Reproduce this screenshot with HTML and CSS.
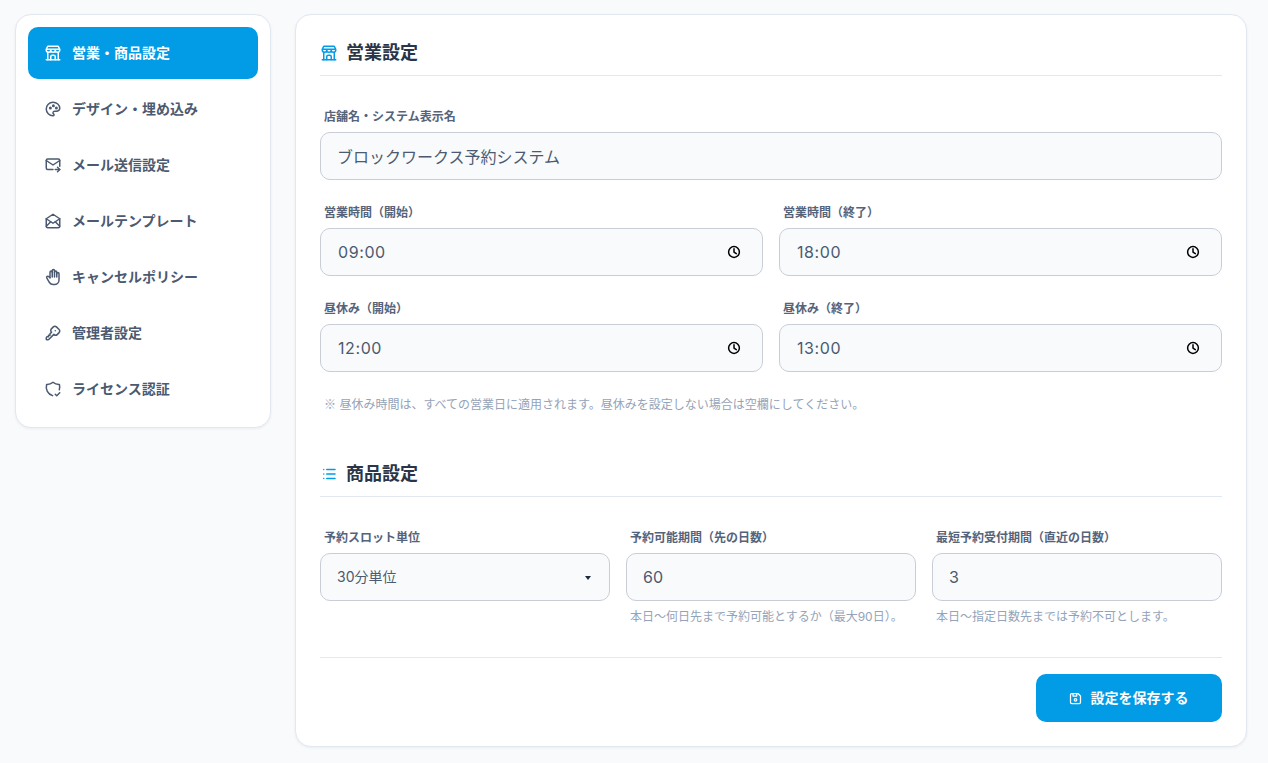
FILE: index.html
```html
<!DOCTYPE html>
<html lang="ja">
<head>
    <meta charset="UTF-8" />
    <meta name="viewport" content="width=device-width, initial-scale=1.0"/>
    <title>設定</title>
    <link rel="stylesheet" href="styles.css">
</head>
<body>
    <svg class="icon-defs" width="0" height="0" aria-hidden="true">
        <symbol id="i-store" viewBox="0 0 24 24"><path d="M3 21l18 0"/><path d="M3 7v1a3 3 0 0 0 6 0v-1m0 1a3 3 0 0 0 6 0v-1m0 1a3 3 0 0 0 6 0v-1h-18l2 -4h14l2 4"/><path d="M5 21l0 -10.15"/><path d="M19 21l0 -10.15"/><path d="M9 21v-4a2 2 0 0 1 2 -2h2a2 2 0 0 1 2 2v4"/></symbol>
        <symbol id="i-palette" viewBox="0 0 24 24"><path d="M12 21a9 9 0 0 1 0 -18c4.97 0 9 3.582 9 8c0 1.06 -.474 2.078 -1.318 2.828c-.844 .75 -1.989 1.172 -3.182 1.172h-2.5a2 2 0 0 0 -1 3.75a1.3 1.3 0 0 1 -1 2.25"/><path d="M8.5 10.5m-1 0a1 1 0 1 0 2 0a1 1 0 1 0 -2 0"/><path d="M12.5 7.5m-1 0a1 1 0 1 0 2 0a1 1 0 1 0 -2 0"/><path d="M16.5 10.5m-1 0a1 1 0 1 0 2 0a1 1 0 1 0 -2 0"/></symbol>
        <symbol id="i-mail-forward" viewBox="0 0 24 24"><path d="M12 18h-7a2 2 0 0 1 -2 -2v-10a2 2 0 0 1 2 -2h14a2 2 0 0 1 2 2v7.5"/><path d="M3 6l9 6l9 -6"/><path d="M15 18h6"/><path d="M18 15l3 3l-3 3"/></symbol>
        <symbol id="i-mail-opened" viewBox="0 0 24 24"><path d="M3 9l9 6l9 -6l-9 -6l-9 6"/><path d="M21 9v10a2 2 0 0 1 -2 2h-14a2 2 0 0 1 -2 -2v-10"/><path d="M3 19l6 -6"/><path d="M15 13l6 6"/></symbol>
        <symbol id="i-hand" viewBox="0 0 24 24"><path d="M8 13v-7.5a1.5 1.5 0 0 1 3 0v6.5"/><path d="M11 5.5v-2a1.5 1.5 0 1 1 3 0v8.5"/><path d="M14 5.5a1.5 1.5 0 0 1 3 0v6.5"/><path d="M17 7.5a1.5 1.5 0 0 1 3 0v8.5a6 6 0 0 1 -6 6h-2h.208a6 6 0 0 1 -5.012 -2.7a69.74 69.74 0 0 1 -.196 -.3c-.312 -.479 -1.407 -2.388 -3.286 -5.728a1.5 1.5 0 0 1 .536 -2.022a1.867 1.867 0 0 1 2.28 .28l1.47 1.47"/></symbol>
        <symbol id="i-key" viewBox="0 0 24 24"><path d="M16.555 3.843l3.602 3.602a2.877 2.877 0 0 1 0 4.069l-2.643 2.643a2.877 2.877 0 0 1 -4.069 0l-.301 -.301l-6.558 6.558a2 2 0 0 1 -1.239 .578l-.175 .008h-1.172a1 1 0 0 1 -.993 -.883l-.007 -.117v-1.172a2 2 0 0 1 .467 -1.284l.119 -.13l.414 -.414h2v-2h2v-2l2.144 -2.144l-.301 -.301a2.877 2.877 0 0 1 0 -4.069l2.643 -2.643a2.877 2.877 0 0 1 4.069 0z"/><path d="M15 9h.01"/></symbol>
        <symbol id="i-shield" viewBox="0 0 24 24"><path d="M11.46 20.846a12 12 0 0 1 -7.96 -14.846a12 12 0 0 0 8.5 -3a12 12 0 0 0 8.5 3a12 12 0 0 1 -.09 7.06"/><path d="M15 19l2 2l4 -4"/></symbol>
        <symbol id="i-list" viewBox="0 0 24 24"><path d="M9 6l11 0"/><path d="M9 12l11 0"/><path d="M9 18l11 0"/><path d="M5 6l0 .01"/><path d="M5 12l0 .01"/><path d="M5 18l0 .01"/></symbol>
        <symbol id="i-save" viewBox="0 0 24 24"><path d="M6 4h10l4 4v10a2 2 0 0 1 -2 2h-12a2 2 0 0 1 -2 -2v-12a2 2 0 0 1 2 -2"/><path d="M12 14m-2 0a2 2 0 1 0 4 0a2 2 0 1 0 -4 0"/><path d="M14 4l0 4l-6 0l0 -4"/></symbol>
        <symbol id="i-clock" viewBox="0 0 14 14"><circle cx="7" cy="7" r="5.4"/><path d="M7 3.8v3.4l2.3 1.5"/></symbol>
    </svg>

    <div class="layout">
        <nav class="sidebar">
            <a class="nav-item active"><svg class="nav-icon"><use href="#i-store"/></svg><span class="nav-label">営業・商品設定</span></a>
            <a class="nav-item"><svg class="nav-icon"><use href="#i-palette"/></svg><span class="nav-label">デザイン・埋め込み</span></a>
            <a class="nav-item"><svg class="nav-icon"><use href="#i-mail-forward"/></svg><span class="nav-label">メール送信設定</span></a>
            <a class="nav-item"><svg class="nav-icon"><use href="#i-mail-opened"/></svg><span class="nav-label">メールテンプレート</span></a>
            <a class="nav-item"><svg class="nav-icon"><use href="#i-hand"/></svg><span class="nav-label">キャンセルポリシー</span></a>
            <a class="nav-item"><svg class="nav-icon"><use href="#i-key"/></svg><span class="nav-label">管理者設定</span></a>
            <a class="nav-item"><svg class="nav-icon"><use href="#i-shield"/></svg><span class="nav-label">ライセンス認証</span></a>
        </nav>

        <main class="panel">
            <h2 class="section-title"><svg class="title-icon"><use href="#i-store"/></svg>営業設定</h2>

            <div class="fields">
                <div class="field">
                    <label class="field-label">店舗名・システム表示名</label>
                    <input class="input" type="text" value="ブロックワークス予約システム">
                </div>
                <div class="row row-2">
                    <div class="field">
                        <label class="field-label">営業時間（開始）</label>
                        <div class="input time-input"><input type="text" value="09:00"><svg class="clock"><use href="#i-clock"/></svg></div>
                    </div>
                    <div class="field">
                        <label class="field-label">営業時間（終了）</label>
                        <div class="input time-input"><input type="text" value="18:00"><svg class="clock"><use href="#i-clock"/></svg></div>
                    </div>
                </div>
                <div class="row row-2">
                    <div class="field">
                        <label class="field-label">昼休み（開始）</label>
                        <div class="input time-input"><input type="text" value="12:00"><svg class="clock"><use href="#i-clock"/></svg></div>
                    </div>
                    <div class="field">
                        <label class="field-label">昼休み（終了）</label>
                        <div class="input time-input"><input type="text" value="13:00"><svg class="clock"><use href="#i-clock"/></svg></div>
                    </div>
                </div>
                <p class="note"><span class="cjk">※</span> 昼休み時間は、すべての営業日に適用されます。昼休みを設定しない場合は空欄にしてください。</p>
            </div>

            <h2 class="section-title second"><svg class="title-icon"><use href="#i-list"/></svg>商品設定</h2>

            <div class="row row-3">
                <div class="field">
                    <label class="field-label">予約スロット単位</label>
                    <div class="select-box">
                        <select class="input select">
                            <option>30分単位</option>
                        </select>
                    </div>
                </div>
                <div class="field">
                    <label class="field-label">予約可能期間（先の日数）</label>
                    <input class="input" type="text" value="60">
                    <p class="help">本日〜何日先まで予約可能とするか（最大90日）。</p>
                </div>
                <div class="field">
                    <label class="field-label">最短予約受付期間（直近の日数）</label>
                    <input class="input" type="text" value="3">
                    <p class="help">本日〜指定日数先までは予約不可とします。</p>
                </div>
            </div>

            <div class="panel-footer">
                <button class="save-button"><svg class="save-icon"><use href="#i-save"/></svg><span class="nav-label">設定を保存する</span></button>
            </div>
        </main>
    </div>
</body>
</html>
```

FILE: styles.css
```css
* {
    margin: 0;
    padding: 0;
    box-sizing: border-box;
    font-family: Inter, 'Noto Sans CJK JP', sans-serif;
}

:root {
    --primary-color: #019ce5;
    --text-color: #4b5a70;
    --label-color: #55637a;
    --title-color: #2a3547;
    --muted-color: #94a3b8;
    --line-color: #e2e8f0;
    --field-border: #c9ced6;
    --page-bg: #f8fafc;
}

body {
    background: var(--page-bg);
    min-height: 100vh;
    overflow: hidden;
}

.icon-defs {
    display: block;
}

.cjk {
    font-family: 'Noto Sans CJK JP', sans-serif;
}

svg {
    fill: none;
    stroke: currentColor;
    stroke-width: 2;
    stroke-linecap: round;
    stroke-linejoin: round;
    flex-shrink: 0;
}

.layout {
    display: flex;
    align-items: flex-start;
    gap: 24px;
    padding: 14px 21px 16px 15px;
}

.sidebar,
.panel {
    background: #fff;
    border: 1px solid var(--line-color);
    border-radius: 16px;
    box-shadow: 0 1px 3px rgba(15, 23, 42, 0.06);
}

.sidebar {
    width: 256px;
    padding: 12px;
    display: flex;
    flex-direction: column;
    gap: 4px;
}

.nav-item {
    height: 52px;
    padding: 0 16px;
    display: flex;
    align-items: center;
    gap: 10px;
    border-radius: 10px;
    font-size: 14px;
    font-weight: 700;
    color: var(--text-color);
}

.nav-item.active {
    background: var(--primary-color);
    color: #fff;
}

.nav-label {
    padding-bottom: 2px;
}

.nav-icon {
    width: 18px;
    height: 18px;
}

.panel {
    flex: 1;
    padding: 24px;
}

.section-title {
    display: flex;
    align-items: center;
    gap: 8px;
    font-size: 18px;
    font-weight: 700;
    line-height: 28px;
    color: var(--title-color);
    padding-bottom: 8px;
    border-bottom: 1px solid var(--line-color);
    margin-bottom: 32px;
}

.section-title.second {
    margin-top: 48px;
}

.title-icon {
    width: 18px;
    height: 18px;
    color: var(--primary-color);
}

.fields {
    display: flex;
    flex-direction: column;
    gap: 24px;
}

.row {
    display: grid;
    gap: 16px;
}

.row-2 {
    grid-template-columns: 1fr 1fr;
}

.row-3 {
    grid-template-columns: 1fr 1fr 1fr;
}

.field-label {
    display: block;
    font-size: 12px;
    font-weight: 700;
    line-height: 14px;
    color: var(--label-color);
    padding: 2px 0 0 4px;
    margin-bottom: 8px;
}

.input {
    display: block;
    width: 100%;
    height: 48px;
    padding: 0 16px;
    background: var(--page-bg);
    border: 1px solid var(--field-border);
    border-radius: 10px;
    font-size: 16px;
    color: var(--text-color);
    outline: none;
}

.time-input {
    display: flex;
    align-items: center;
}

.time-input input {
    flex: 1;
    min-width: 0;
    border: none;
    background: transparent;
    font-size: 16px;
    color: var(--text-color);
    letter-spacing: 0.6px;
    padding-left: 1px;
    outline: none;
}

.clock {
    width: 14px;
    height: 14px;
    margin-right: 5px;
    color: #000;
    stroke-width: 1.5;
}

.select-box {
    position: relative;
}

.select-box::after {
    content: '';
    position: absolute;
    top: 23px;
    right: 19px;
    border-left: 3px solid transparent;
    border-right: 3px solid transparent;
    border-top: 4px solid #1e293b;
    pointer-events: none;
}

.select {
    font-size: 14px;
    appearance: none;
    padding-bottom: 2px;
}

.note,
.help {
    font-size: 12px;
    line-height: 16px;
    color: var(--muted-color);
}

.note {
    height: 16px;
    padding-left: 4px;
}

.help {
    padding-left: 4px;
    margin-top: 8px;
}

.panel-footer {
    display: flex;
    justify-content: flex-end;
    margin-top: 32px;
    padding-top: 16px;
    border-top: 1px solid var(--line-color);
}

.save-button {
    width: 186px;
    height: 48px;
    padding-right: 2px;
    display: flex;
    align-items: center;
    justify-content: center;
    gap: 8px;
    background: var(--primary-color);
    color: #fff;
    border: none;
    border-radius: 10px;
    font-size: 14px;
    font-weight: 700;
    cursor: pointer;
}

.save-icon {
    width: 15px;
    height: 15px;
}
```
